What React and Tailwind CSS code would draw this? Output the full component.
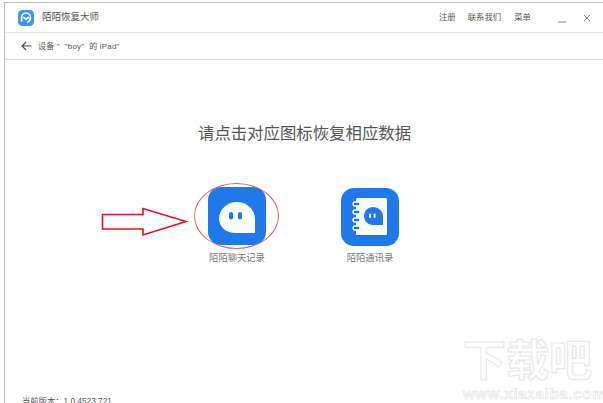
const cjk = { fontFamily: '"Liberation Sans", "Noto Sans CJK SC", sans-serif' };

function Logo() {
  return (
    <svg width="16" height="16" viewBox="0 0 16 16">
      <rect width="16" height="16" rx="4.5" fill="#3b93f3" />
      <path d="M3.6 11V7.4a4.4 4.4 0 0 1 8.8 0c0 2.4-1.2 3.9-2.6 4.7" fill="none" stroke="#fff" strokeWidth="1.7" strokeLinecap="round" />
      <path d="M5.7 7.4 8 9.2l2.3-1.8" fill="none" stroke="#fff" strokeWidth="1.5" strokeLinecap="round" />
    </svg>
  );
}

function ChatIcon() {
  return (
    <svg width="58" height="58" viewBox="0 0 58 58">
      <rect width="58" height="58" rx="13" fill="#2079e8" />
      <path d="M29 15c-9.900 0-18 7.800-18 16.500 0 8.500 7 14.500 17 14.500h19V32c0-9.200-8.100-17-18-17Z" fill="#fff" />
      <rect x="21" y="25" width="4" height="7.500" rx="2" fill="#2079e8" />
      <rect x="30" y="25" width="4" height="7.500" rx="2" fill="#2079e8" />
    </svg>
  );
}

function BookIcon() {
  return (
    <svg width="58" height="58" viewBox="0 0 58 58">
      <rect width="58" height="58" rx="13" fill="#2079e8" />
      <rect x="15" y="10" width="31" height="37" rx="1.500" fill="#fff" />
      {[14, 22, 30, 38].map((y) => (
        <rect key={y} x="12" y={y} width="7" height="4" rx="2" fill="#2079e8" stroke="#fff" strokeWidth="1.300" />
      ))}
      <path d="M32 19c-5 0-9 4-9 9 0 5 4 9 9 9h10v-9c0-5-5-9-10-9Z" fill="#2079e8" />
      <rect x="28" y="25.500" width="2" height="4.500" rx="1" fill="#fff" />
      <rect x="32.500" y="25.500" width="2" height="4.500" rx="1" fill="#fff" />
    </svg>
  );
}

function Arrow() {
  return (
    <svg width="88" height="30" viewBox="0 0 88 30" className="shrink-0">
      <path d="M1.500 7.500H42V1.500L85 14.500 42 28V22H1.500Z" fill="#fff" stroke="#e0141c" strokeWidth="1.600" />
    </svg>
  );
}

export default function App() {
  return (
    <div className="relative w-[603px] h-[403px] overflow-hidden bg-white pt-[2px] pl-[4px]" style={cjk}>
      <div className="h-[401px] border-t border-l border-[#bdbdbd] flex flex-col">
        <div className="h-[30px] shrink-0 flex items-center border-b border-[#e4e4e4] pl-[13px]">
          <Logo />
          <span className="ml-[8px] text-[9.5px] text-[#555]">陌陌恢复大师</span>
          <div className="ml-auto flex items-center text-[8.400px] text-[#555]">
            <span>注册</span>
            <span className="ml-[12px]">联系我们</span>
            <span className="ml-[13px]">菜单</span>
            <svg width="8" height="8" viewBox="0 0 8 8" className="ml-[27px] mt-[3px]">
              <path d="M0 7h8" stroke="#666" strokeWidth="0.800" />
            </svg>
            <svg width="8" height="8" viewBox="0 0 8 8" className="ml-[17px] mr-[12px] mt-[2px]">
              <path d="M1 1l6 6M7 1L1 7" stroke="#666" strokeWidth="0.800" />
            </svg>
          </div>
        </div>
        <div className="h-[27px] shrink-0 flex items-center border-b border-[#dcdcdc] pl-[16px] text-[8px] text-[#555]">
          <svg width="11" height="10" viewBox="0 0 11 10">
            <path d="M10.500 5H1M5 1 1 5l4 4" fill="none" stroke="#444" strokeWidth="1.100" />
          </svg>
          <span className="ml-[6px] mt-[1px] whitespace-pre tracking-[0.2px]">设备 "  "boy"  的 iPad"</span>
        </div>
        <div className="flex-1 flex flex-col">
          <div className="mt-[62px] pl-[193px] text-[16.400px] leading-[22px] text-[#555]">请点击对应图标恢复相应数据</div>
          <div className="mt-[43px] flex pl-[96px]">
            <div className="mt-[20px]"><Arrow /></div>
            <div className="relative ml-[19px] flex flex-col items-center w-[58px]">
              <ChatIcon />
              <span className="mt-[7px] text-[9.300px] whitespace-nowrap text-[#777]">陌陌聊天记录</span>
              <div className="absolute left-[-14px] top-[-4px] w-[85px] h-[66px] rounded-[50%] border border-[#d9606a]" />
            </div>
            <div className="ml-[75px] mt-[1px] flex flex-col items-center w-[58px]">
              <BookIcon />
              <span className="mt-[6px] text-[9.300px] whitespace-nowrap text-[#777]">陌陌通讯录</span>
            </div>
          </div>
          <div className="mt-auto pl-[17px] text-[8.300px] leading-[10px] text-[#555] translate-y-[3px]">当前版本：1.0.4523.721</div>
        </div>
      </div>
      <div className="absolute left-[463px] top-[336px]">
        <div className="text-[43px] leading-[50px] font-bold whitespace-nowrap text-white [-webkit-text-stroke:1px_#e6e6e6]">下载吧</div>
        <div className="text-[15px] leading-[15px] tracking-[0.7px] font-bold whitespace-nowrap text-white [-webkit-text-stroke:0.6px_#dedede]">www.xiazaiba.com</div>
      </div>
    </div>
  );
}
